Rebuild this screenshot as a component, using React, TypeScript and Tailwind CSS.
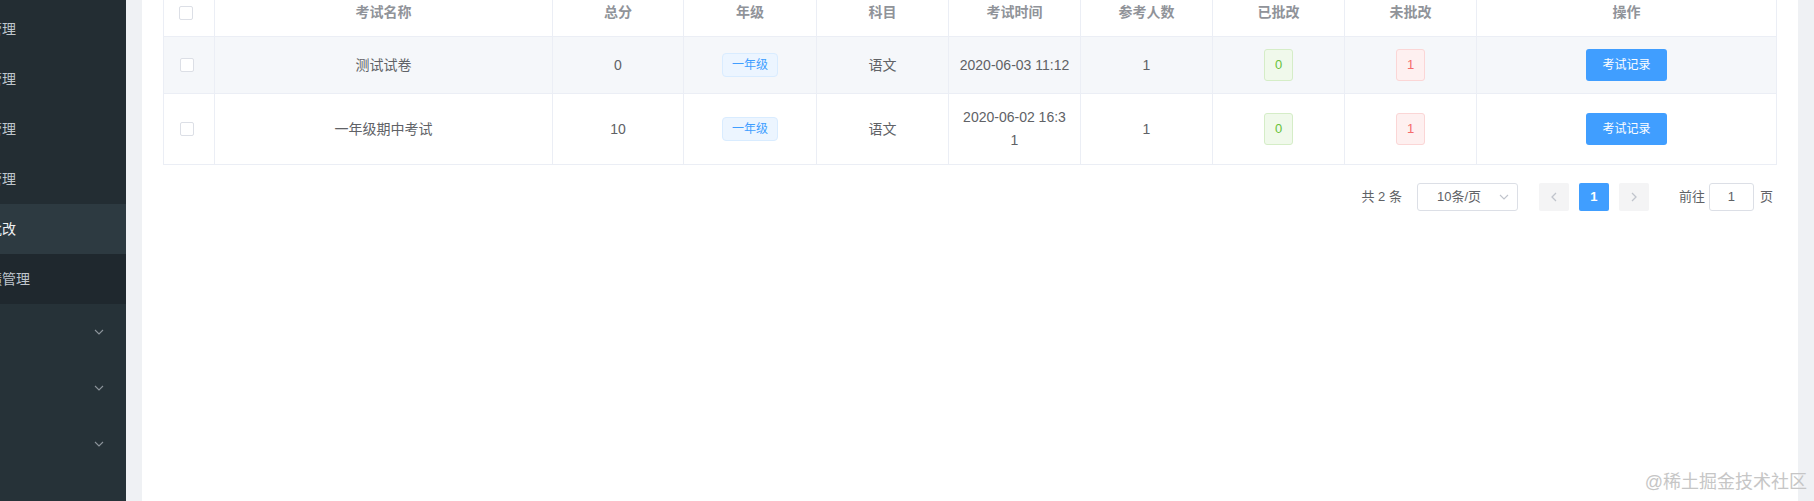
import React from "react";

const cols =
  "grid grid-cols-[51px_338px_131px_133px_132px_132px_132px_132px_132px_1fr]";

function Checkbox() {
  return (
    <span className="block w-[14px] h-[14px] rounded-[2px] border border-[#dcdfe6] bg-white" />
  );
}

function Cell({
  children,
  last,
  className = "",
}: {
  children?: React.ReactNode;
  last?: boolean;
  className?: string;
}) {
  return (
    <div
      className={[
        "flex items-center justify-center text-center",
        last ? "" : "border-r border-[#ebeef5]",
        className,
      ].join(" ")}
    >
      {children}
    </div>
  );
}

function Chevron({ className = "" }: { className?: string }) {
  return (
    <svg width="10" height="6" viewBox="0 0 10 6" className={className}>
      <path d="M1 1l4 4 4-4" fill="none" stroke="currentColor" strokeWidth="1.1" />
    </svg>
  );
}

function MenuItem({
  label,
  offset,
  active,
  bg,
}: {
  label: string;
  offset: string;
  active?: boolean;
  bg: string;
}) {
  return (
    <div className={["h-[50px] flex items-center whitespace-nowrap", bg].join(" ")}>
      <span
        className={[
          "text-[14px]",
          offset,
          active ? "text-[#eef1f3]" : "text-[#bfc6cd]",
        ].join(" ")}
      >
        {label}
      </span>
    </div>
  );
}

type Row = {
  name: string;
  score: string;
  time: React.ReactNode;
  h: string;
  bg: string;
};

const rows: Row[] = [
  {
    name: "测试试卷",
    score: "0",
    time: "2020-06-03 11:12",
    h: "h-[57px] border-b border-[#ebeef5]",
    bg: "bg-[#f5f7fa]",
  },
  {
    name: "一年级期中考试",
    score: "10",
    time: (
      <span className="leading-[23px]">
        2020-06-02 16:3
        <br />1
      </span>
    ),
    h: "h-[70px]",
    bg: "bg-white",
  },
];

export default function App() {
  return (
    <div className="relative flex h-[501px] w-full overflow-hidden bg-[#eff1f4] font-['Liberation_Sans','Noto_Sans_CJK_SC',sans-serif]">
      {/* Sidebar */}
      <div className="w-[126px] shrink-0 bg-[#263238] overflow-hidden">
        <div className="h-[4px] bg-[#232d33]" />
        <MenuItem label="用户管理" offset="-ml-[40px]" bg="bg-[#232d33]" />
        <MenuItem label="班级管理" offset="-ml-[40px]" bg="bg-[#232d33]" />
        <MenuItem label="题库管理" offset="-ml-[40px]" bg="bg-[#232d33]" />
        <MenuItem label="试卷管理" offset="-ml-[40px]" bg="bg-[#232d33]" />
        <MenuItem label="阅卷批改" offset="-ml-[40px]" active bg="bg-[#2d3a41]" />
        <MenuItem label="成绩管理" offset="-ml-[26px]" bg="bg-[#1f282e]" />
        {[0, 1, 2].map((i) => (
          <div key={i} className="h-[56px] flex items-center justify-end pr-[22px]">
            <Chevron className="text-[#8c949b]" />
          </div>
        ))}
      </div>

      {/* Main */}
      <div className="flex-1 px-[16px]">
        <div className="h-full flex flex-col bg-white px-[21px]">
          <div className="-mt-[11px] border-x border-b border-[#ebeef5] text-[14px] text-[#606266]">
            {/* header */}
            <div className={[cols, "h-[48px] border-b border-[#ebeef5] font-bold text-[#909399]"].join(" ")}>
              <Cell className="!justify-start pl-[15px]">
                <Checkbox />
              </Cell>
              <Cell>考试名称</Cell>
              <Cell>总分</Cell>
              <Cell>年级</Cell>
              <Cell>科目</Cell>
              <Cell>考试时间</Cell>
              <Cell>参考人数</Cell>
              <Cell>已批改</Cell>
              <Cell>未批改</Cell>
              <Cell last>操作</Cell>
            </div>

            {rows.map((r) => (
              <div key={r.name} className={[cols, r.h, r.bg].join(" ")}>
                <Cell className="!justify-start pl-[16px]">
                  <Checkbox />
                </Cell>
                <Cell>{r.name}</Cell>
                <Cell>{r.score}</Cell>
                <Cell>
                  <span className="h-[24px] px-[9px] flex items-center rounded-[4px] border border-[#d9ecff] bg-[#ecf5ff] text-[12px] text-[#409eff]">
                    一年级
                  </span>
                </Cell>
                <Cell>语文</Cell>
                <Cell>{r.time}</Cell>
                <Cell>1</Cell>
                <Cell>
                  <span className="w-[29px] h-[32px] flex items-center justify-center rounded-[3px] border border-[#d5edc7] bg-[#f0f9eb] text-[13px] text-[#67c23a]">
                    0
                  </span>
                </Cell>
                <Cell>
                  <span className="w-[29px] h-[32px] flex items-center justify-center rounded-[3px] border border-[#fbd6d6] bg-[#fef0f0] text-[13px] text-[#f56c6c]">
                    1
                  </span>
                </Cell>
                <Cell last>
                  <button className="w-[81px] h-[32px] rounded-[3px] bg-[#409eff] text-[12px] text-white">
                    考试记录
                  </button>
                </Cell>
              </div>
            ))}
          </div>

          {/* Pagination */}
          <div className="mt-[18px] pr-[4px] flex items-center justify-end text-[13px] text-[#606266]">
            <span>共 2 条</span>
            <div className="ml-[15px] w-[101px] h-[28px] flex items-center rounded-[3px] border border-[#dcdfe6] pl-[19px] pr-[8px]">
              <span className="flex-1">10条/页</span>
              <Chevron className="text-[#c0c4cc]" />
            </div>
            <button className="ml-[21px] w-[30px] h-[28px] flex items-center justify-center rounded-[2px] bg-[#f4f4f5] text-[#c0c4cc]">
              <svg width="6" height="10" viewBox="0 0 6 10">
                <path d="M5 1L1 5l4 4" fill="none" stroke="currentColor" strokeWidth="1.3" />
              </svg>
            </button>
            <button className="ml-[10px] w-[30px] h-[28px] flex items-center justify-center rounded-[2px] bg-[#409eff] font-bold text-white">
              1
            </button>
            <button className="ml-[10px] w-[30px] h-[28px] flex items-center justify-center rounded-[2px] bg-[#f4f4f5] text-[#c0c4cc]">
              <svg width="6" height="10" viewBox="0 0 6 10">
                <path d="M1 1l4 4-4 4" fill="none" stroke="currentColor" strokeWidth="1.3" />
              </svg>
            </button>
            <span className="ml-[30px]">前往</span>
            <div className="ml-[4px] w-[45px] h-[28px] flex items-center justify-center rounded-[3px] border border-[#dcdfe6]">
              1
            </div>
            <span className="ml-[6px]">页</span>
          </div>
        </div>
      </div>

      {/* watermark */}
      <div className="absolute right-[7px] bottom-[5px] text-[18px] text-[#c6c6c6] tracking-[0px]">
        @稀土掘金技术社区
      </div>
    </div>
  );
}
